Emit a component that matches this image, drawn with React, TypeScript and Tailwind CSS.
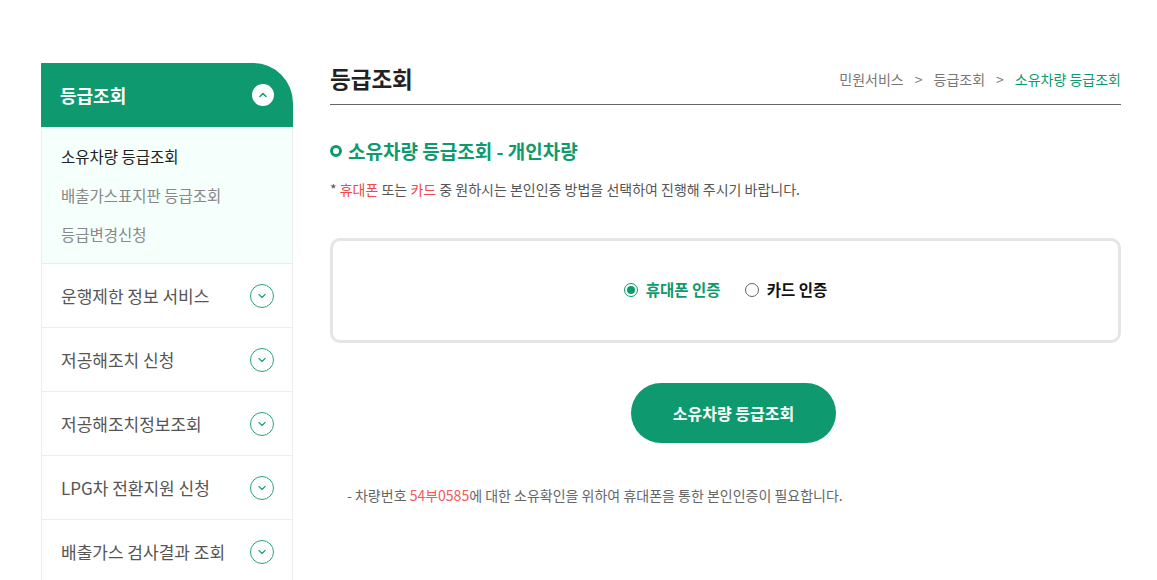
import { ChevronDown, ChevronUp } from "lucide-react";

const font = { fontFamily: '"Noto Sans CJK KR", "Noto Sans", sans-serif' };

const menus = [
  "운행제한 정보 서비스",
  "저공해조치 신청",
  "저공해조치정보조회",
  "LPG차 전환지원 신청",
  "배출가스 검사결과 조회",
];

function Sidebar() {
  return (
    <aside className="w-[252px] shrink-0">
      <div className="flex h-16 items-center justify-between rounded-tr-[40px] bg-[#0e9a6e] pl-[19px] pr-[19px]">
        <span className="text-[18px] font-bold text-white">등급조회</span>
        <span className="flex h-[22px] w-[22px] items-center justify-center rounded-full bg-white">
          <ChevronUp className="h-3 w-3 text-[#0e9a6e]" strokeWidth={3} />
        </span>
      </div>
      <ul className="flex flex-col gap-[18px] border-x border-b border-[#ececec] bg-[#f5fffb] pt-[19px] pb-[18px] pl-[19px] text-[15.5px]">
        <li className="leading-[21px] text-[#222]">소유차량 등급조회</li>
        <li className="leading-[21px] text-[#888]">배출가스표지판 등급조회</li>
        <li className="leading-[21px] text-[#888]">등급변경신청</li>
      </ul>
      {menus.map((m) => (
        <div
          key={m}
          className="flex h-16 items-center justify-between border-x border-b border-[#ececec] pl-[19px] pr-[18px]"
        >
          <span className="text-[17px] text-[#555]">{m}</span>
          <span className="flex h-6 w-6 items-center justify-center rounded-full border border-[#26a57c]">
            <ChevronDown className="h-3 w-3 text-[#26a57c]" strokeWidth={2.5} />
          </span>
        </div>
      ))}
    </aside>
  );
}

export default function App() {
  return (
    <div style={font} className="flex min-h-[580px] gap-[37px] bg-white pl-[41px] pr-[36px] pt-[63px]">
      <Sidebar />
      <main className="flex-1">
        <div className="flex h-[42px] items-center justify-between border-b border-[#666]">
          <h1 className="mt-[-9px] text-[22.5px] font-bold text-[#222]">등급조회</h1>
          <div className="mt-[-9px] flex items-center gap-[11px] text-[14px] text-[#777]">
            <span>민원서비스</span>
            <span>&gt;</span>
            <span>등급조회</span>
            <span>&gt;</span>
            <span className="text-[#0e9a6e]">소유차량 등급조회</span>
          </div>
        </div>

        <h2 className="mt-[32px] flex items-center gap-[6px] text-[19px] font-bold text-[#0e9a6e]">
          <span className="h-3 w-3 rounded-full border-[3px] border-[#0e9a6e]" />
          소유차량 등급조회 - 개인차량
        </h2>
        <p className="mt-[13px] text-[14px] text-[#555]">
          * <span className="text-[#f04a4a]">휴대폰</span> 또는{" "}
          <span className="text-[#f04a4a]">카드</span> 중 원하시는 본인인증 방법을 선택하여 진행해 주시기 바랍니다.
        </p>

        <div className="mt-[38px] flex h-[105px] items-center justify-center gap-[24px] rounded-[10px] border-[3px] border-[#e5e5e5]">
          <label className="flex items-center gap-[8px] text-[15.5px] font-bold text-[#0e9a6e]">
            <span className="flex h-[14px] w-[14px] items-center justify-center rounded-full border border-[#0e9a6e]">
              <span className="h-[8px] w-[8px] rounded-full bg-[#0e9a6e]" />
            </span>
            휴대폰 인증
          </label>
          <label className="flex items-center gap-[8px] text-[15.5px] font-bold text-[#111]">
            <span className="h-[14px] w-[14px] rounded-full border border-[#666]" />
            카드 인증
          </label>
        </div>

        <div className="mt-[40px] flex justify-center pl-[16px]">
          <button className="h-[60px] w-[205px] rounded-full bg-[#0e9a6e] text-[16px] font-bold text-white">
            소유차량 등급조회
          </button>
        </div>

        <p className="mt-[42px] pl-[17px] text-[14px] text-[#666]">
          - 차량번호 <span className="text-[#f05a5a]">54부0585</span>에 대한 소유확인을 위하여 휴대폰을 통한 본인인증이 필요합니다.
        </p>
      </main>
    </div>
  );
}
